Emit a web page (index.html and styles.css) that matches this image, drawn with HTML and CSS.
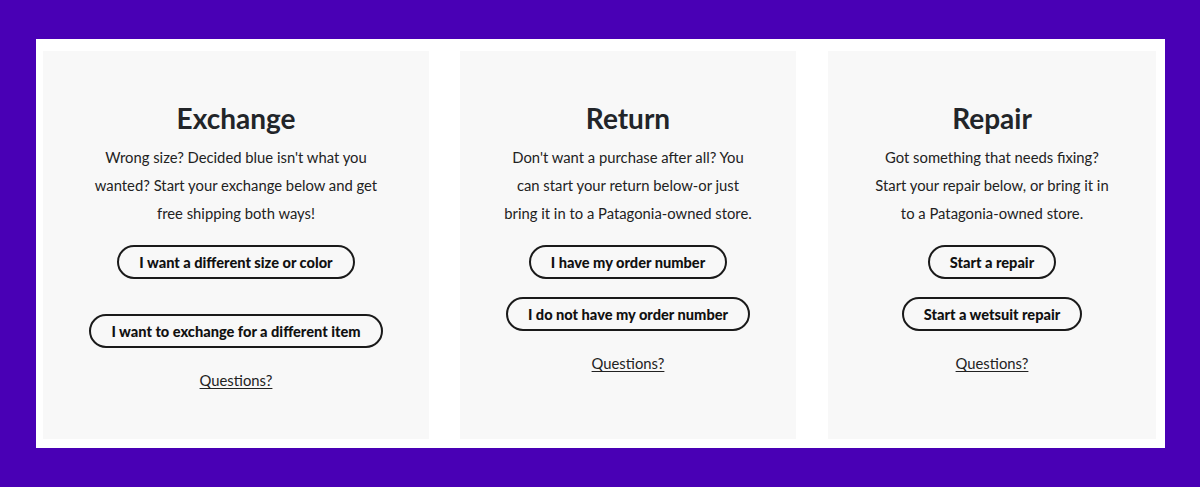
FILE: index.html
```html
<!DOCTYPE html>
<html lang="en">
<head>
<meta charset="utf-8">
<title>Returns</title>
<link rel="stylesheet" href="styles.css">
</head>
<body>
<main class="panel">
  <section class="card card-exchange">
    <h2 class="title">Exchange</h2>
    <p class="desc">Wrong size? Decided blue isn't what you<br>wanted? Start your exchange below and get<br>free shipping both ways!</p>
    <div class="actions actions-wide">
      <a class="btn" href="#">I want a different size or color</a>
      <a class="btn" href="#">I want to exchange for a different item</a>
    </div>
    <a class="questions" href="#">Questions?</a>
  </section>
  <section class="card card-return">
    <h2 class="title">Return</h2>
    <p class="desc">Don't want a purchase after all? You<br>can start your return below-or just<br>bring it in to a Patagonia-owned store.</p>
    <div class="actions">
      <a class="btn" href="#">I have my order number</a>
      <a class="btn" href="#">I do not have my order number</a>
    </div>
    <a class="questions" href="#">Questions?</a>
  </section>
  <section class="card card-repair">
    <h2 class="title">Repair</h2>
    <p class="desc">Got something that needs fixing?<br>Start your repair below, or bring it in<br>to a Patagonia-owned store.</p>
    <div class="actions">
      <a class="btn" href="#">Start a repair</a>
      <a class="btn" href="#">Start a wetsuit repair</a>
    </div>
    <a class="questions" href="#">Questions?</a>
  </section>
</main>
</body>
</html>
```

FILE: styles.css
```css
* { box-sizing: border-box; }
html, body { margin: 0; }
body {
  background: #4900b5;
  padding: 39px 0 0 36px;
  font-family: "Lato", "Noto Sans", sans-serif;
  color: #222;
}
.panel {
  width: 1129px;
  height: 409px;
  background: #fff;
  box-shadow: 0 1px 0 #b9b4c8;
  padding: 12px 8px 9px 7px;
  display: grid;
  grid-template-columns: 386px 336px 329px;
  column-gap: 31px;
}
.card-repair { margin-left: 1px; }
.card {
  background: #f8f8f8;
  display: flex;
  flex-direction: column;
  align-items: center;
  padding-top: 51px;
  text-align: center;
}
.title {
  margin: 0;
  font-size: 28px;
  line-height: 32px;
  font-weight: 700;
  color: #222529;
}
.desc {
  margin: 9px 0 0;
  font-size: 14.8px;
  line-height: 28px;
  color: #222;
  white-space: nowrap;
}
.actions {
  margin-top: 18px;
  display: flex;
  flex-direction: column;
  align-items: center;
  gap: 18px;
}
.actions-wide { gap: 35px; }
.btn {
  display: inline-flex;
  align-items: center;
  justify-content: center;
  height: 34px;
  padding: 0 20px;
  border: 2px solid #1a1a1a;
  border-radius: 17px;
  font-size: 14.6px;
  font-weight: 900;
  color: #111;
  text-decoration: none;
  white-space: nowrap;
}
.questions {
  margin-top: 22px;
  font-size: 14.8px;
  line-height: 20px;
  color: #222;
  text-decoration: underline;
  text-underline-offset: 2px;
}
```
